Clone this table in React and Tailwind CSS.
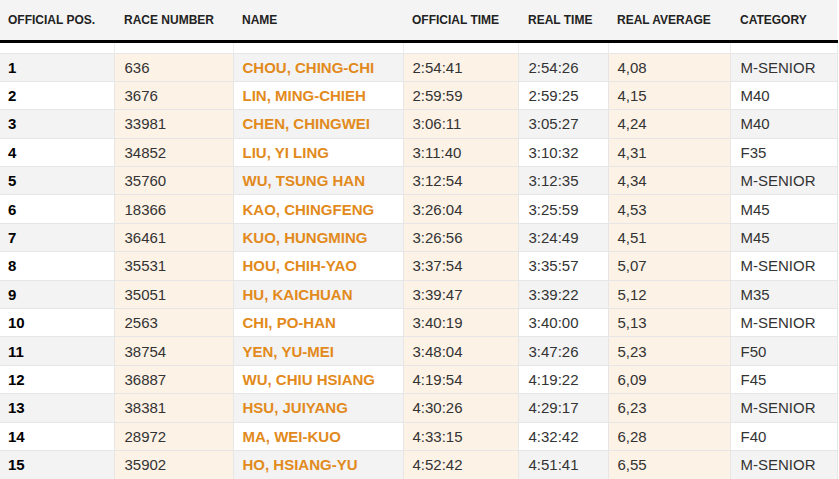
import React from "react";

const rows = [
  ["1", "636", "CHOU, CHING-CHI", "2:54:41", "2:54:26", "4,08", "M-SENIOR"],
  ["2", "3676", "LIN, MING-CHIEH", "2:59:59", "2:59:25", "4,15", "M40"],
  ["3", "33981", "CHEN, CHINGWEI", "3:06:11", "3:05:27", "4,24", "M40"],
  ["4", "34852", "LIU, YI LING", "3:11:40", "3:10:32", "4,31", "F35"],
  ["5", "35760", "WU, TSUNG HAN", "3:12:54", "3:12:35", "4,34", "M-SENIOR"],
  ["6", "18366", "KAO, CHINGFENG", "3:26:04", "3:25:59", "4,53", "M45"],
  ["7", "36461", "KUO, HUNGMING", "3:26:56", "3:24:49", "4,51", "M45"],
  ["8", "35531", "HOU, CHIH-YAO", "3:37:54", "3:35:57", "5,07", "M-SENIOR"],
  ["9", "35051", "HU, KAICHUAN", "3:39:47", "3:39:22", "5,12", "M35"],
  ["10", "2563", "CHI, PO-HAN", "3:40:19", "3:40:00", "5,13", "M-SENIOR"],
  ["11", "38754", "YEN, YU-MEI", "3:48:04", "3:47:26", "5,23", "F50"],
  ["12", "36887", "WU, CHIU HSIANG", "4:19:54", "4:19:22", "6,09", "F45"],
  ["13", "38381", "HSU, JUIYANG", "4:30:26", "4:29:17", "6,23", "M-SENIOR"],
  ["14", "28972", "MA, WEI-KUO", "4:33:15", "4:32:42", "6,28", "F40"],
  ["15", "35902", "HO, HSIANG-YU", "4:52:42", "4:51:41", "6,55", "M-SENIOR"],
];

const headers = [
  "OFFICIAL POS.",
  "RACE NUMBER",
  "NAME",
  "OFFICIAL TIME",
  "REAL TIME",
  "REAL AVERAGE",
  "CATEGORY",
];

const widths = ["w-[114px]", "w-[119px]", "w-[170px]", "w-[115px]", "w-[90px]", "w-[122px]", "w-[107px]"];
const padLeft = ["pl-[8px]", "pl-[10px]", "pl-[9px]", "pl-[9px]", "pl-[10px]", "pl-[9px]", "pl-[10px]"];

export default function App() {
  return (
    <div className="w-[839px] h-[479px] bg-white overflow-hidden font-['Liberation_Sans',Arial,sans-serif]">
      <table className="w-[837px] border-collapse table-fixed">
        <colgroup>
          {widths.map((w, i) => (
            <col key={i} className={w} />
          ))}
        </colgroup>
        <thead>
          <tr className="bg-[#f4f4f4] border-b-[3px] border-black">
            {headers.map((h, i) => (
              <th
                key={i}
                className={`h-[41px] text-left align-middle text-[12px] font-bold text-[#222] ${padLeft[i]}`}
              >
                {h}
              </th>
            ))}
          </tr>
        </thead>
        <tbody>
          <tr className="h-[12px]">
            {headers.map((_, i) => (
              <td key={i} className="border-r border-[#ececec] p-0 bg-white"></td>
            ))}
          </tr>
          {rows.map((r, ri) => {
            const stripe = ri % 2 === 0 ? "bg-[#f3f3f3]" : "bg-white";
            return (
              <tr key={ri} className="h-[28.4px] border-t border-[#e6e6e6]">
                {r.map((c, ci) => {
                  const tint = ci % 2 === 1 ? "bg-[#fdf2e6]" : stripe;
                  let txt = "text-[15px] text-[#333]";
                  if (ci === 0) txt = "text-[15px] font-bold text-black";
                  if (ci === 2) txt = "text-[15px] font-bold text-[#e28a1c]";
                  return (
                    <td
                      key={ci}
                      className={`${tint} ${txt} ${padLeft[ci]} border-r border-[#e6e6e6] p-0 align-middle leading-none whitespace-nowrap`}
                    >
                      {c}
                    </td>
                  );
                })}
              </tr>
            );
          })}
        </tbody>
      </table>
    </div>
  );
}
